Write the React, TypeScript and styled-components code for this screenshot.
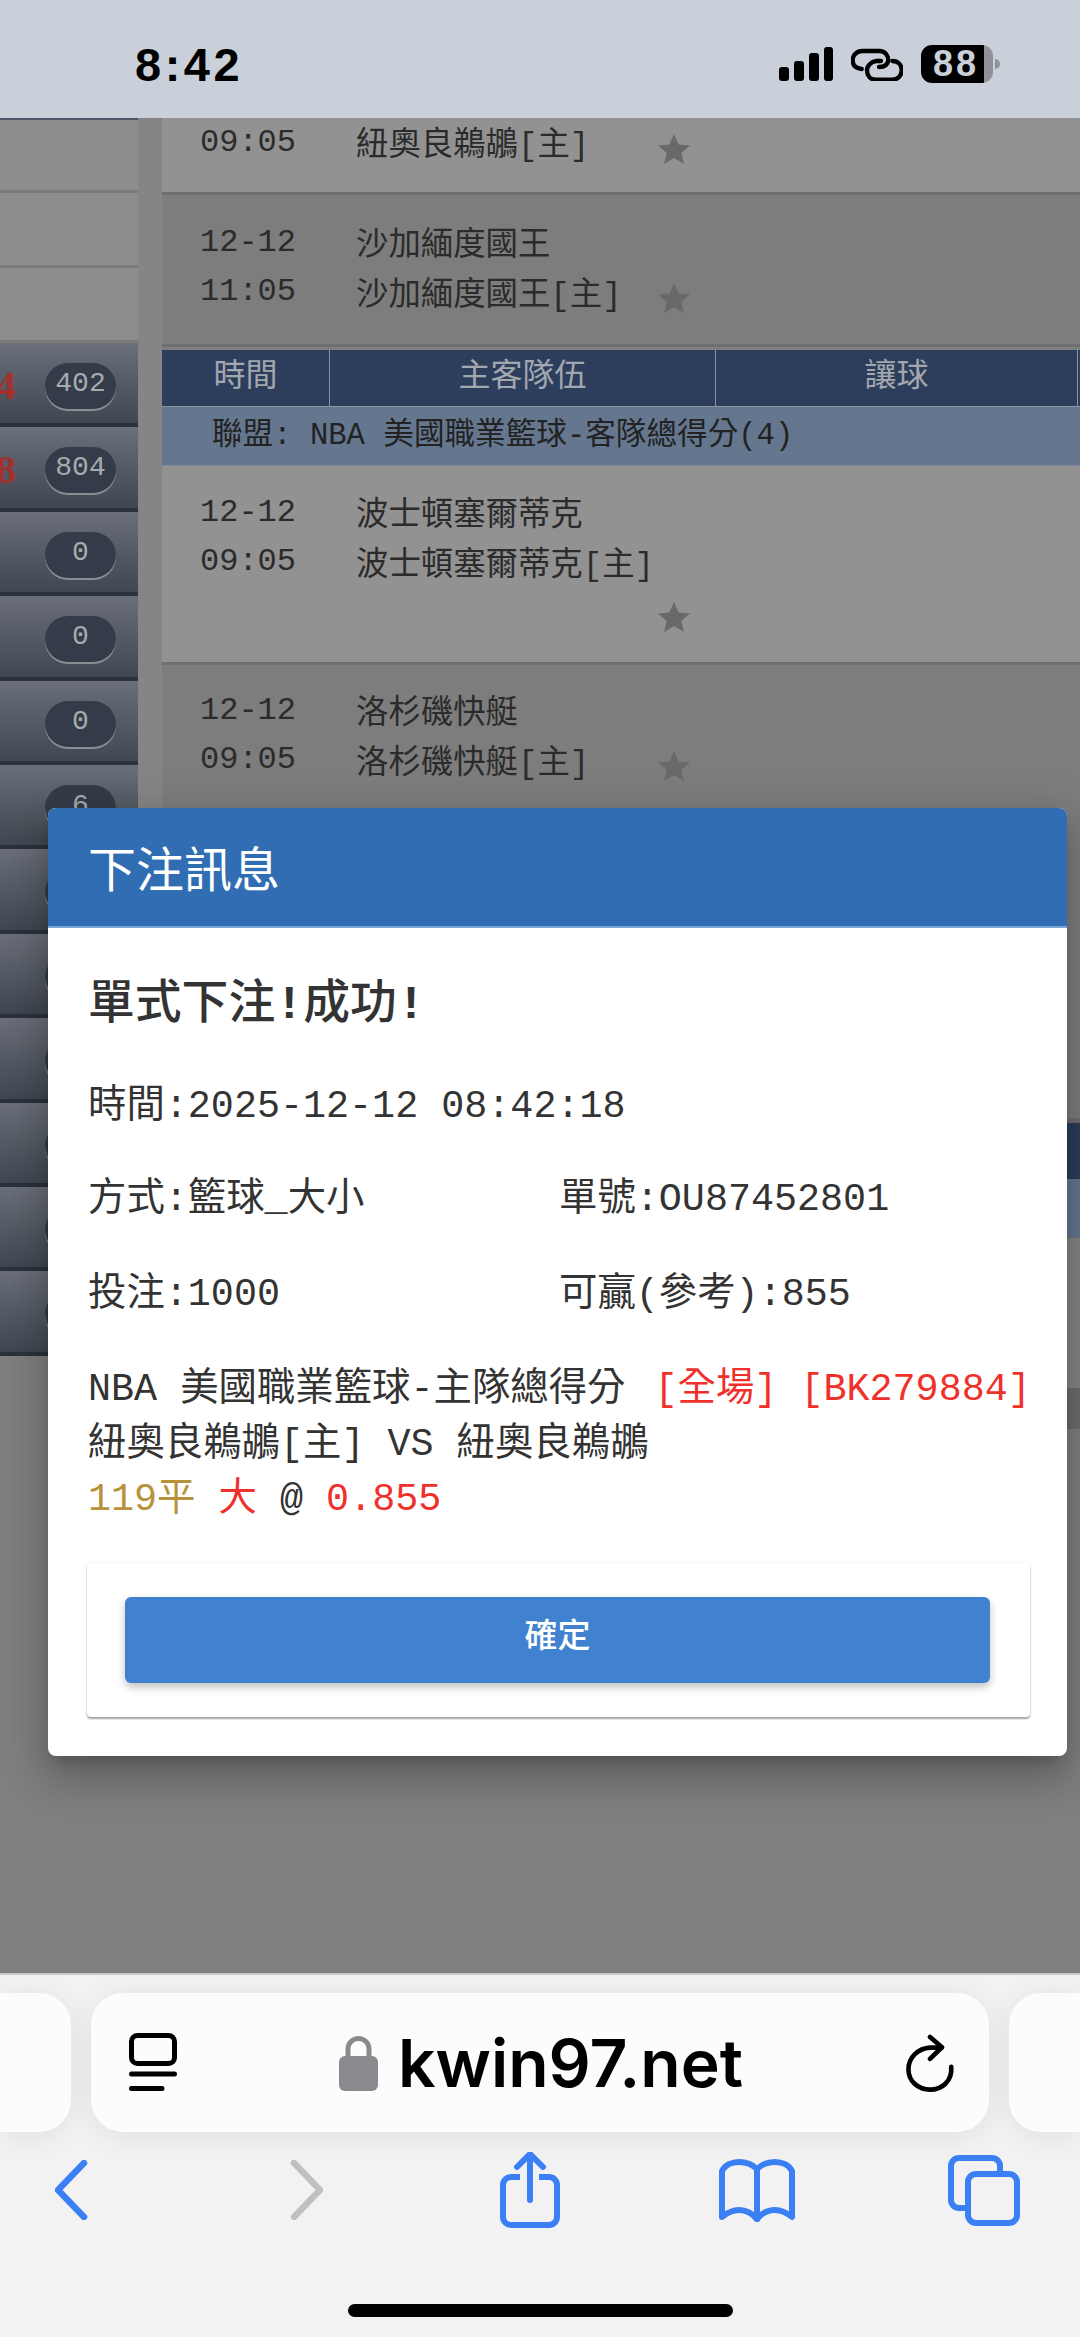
import React, { FC } from "react";
import styled, { createGlobalStyle } from "styled-components";

const MONO = `"Liberation Mono", "Noto Sans CJK TC", monospace`;
const SANS = `"Noto Sans CJK TC", "Liberation Sans", sans-serif`;
const BLUE = "#3b7ff5";

const GlobalStyle = createGlobalStyle`
    html, body {
        margin: 0;
        padding: 0;
        width: 1080px;
        height: 2337px;
        overflow: hidden;
        background: #f2f2f3;
    }
`;

const Phone = styled.div`
    position: relative;
    width: 1080px;
    height: 2337px;
    display: flex;
    flex-direction: column;
    overflow: hidden;
`;

/* status bar */
const StatusBar = styled.div`
    height: 118px;
    flex: none;
    background: #c9d0d9;
    display: flex;
    align-items: flex-start;
    justify-content: space-between;
    box-sizing: border-box;
    padding: 45px 87px 0 135px;
`;

const Clock = styled.div`
    font: 700 47px/40px "Liberation Sans", sans-serif;
    color: #000;
    letter-spacing: 3.5px;
`;

const StatusIcons = styled.div`
    display: flex;
    align-items: center;
    gap: 18px;
    height: 38px;
`;

const Battery = styled.div`
    position: relative;
    width: 72px;
    height: 38px;
    border-radius: 11px;
    background: linear-gradient(90deg, #000 0 88%, #8f9299 88% 100%);
    color: #c9d0d9;
    font: 700 36px/38px "Liberation Sans", sans-serif;
    letter-spacing: 3px;
    padding-left: 12px;
    box-sizing: border-box;

    &::after {
        content: "";
        position: absolute;
        right: -7px;
        top: 14px;
        width: 5px;
        height: 10px;
        border-radius: 0 5px 5px 0;
        background: #8f9299;
    }
`;

/* dimmed page behind the dialog */
const Page = styled.div`
    flex: 1;
    display: flex;
    background: #7f7f7f;
    overflow: hidden;
`;

const Sidebar = styled.div`
    width: 138px;
    flex: none;
    overflow: hidden;
`;

const Gutter = styled.div`
    width: 24px;
    height: 1310px;
    flex: none;
    background: #858585;
`;

const Main = styled.div`
    flex: 1;
    min-width: 0;
`;

const BlankRow = styled.div`
    height: 75px;
    box-sizing: border-box;
    background: #8d8d8d;
    border-bottom: 3px solid #7b7b7b;

    &:first-child {
        border-top: 2px solid #4d5767;
    }
`;

const CountRow = styled.div`
    height: 84.4px;
    box-sizing: border-box;
    display: flex;
    align-items: flex-start;
    justify-content: flex-end;
    padding: 20px 22px 0 0;
    background: linear-gradient(180deg, #6a6f79 0%, #404750 100%);
    border-bottom: 4px solid #2b323c;
`;

const RedCount = styled.span`
    flex: none;
    margin: 1px 29px 0 0;
    font: 700 40px/44px "Liberation Serif", serif;
    color: #a3302c;
`;

const Pill = styled.div`
    flex: none;
    width: 71px;
    height: 46px;
    border-radius: 24px;
    background: #333c48;
    box-shadow: 0 2px 0 #8b8f94;
    color: #a8abae;
    font: 400 28px/42px "Liberation Mono", monospace;
    text-align: center;
`;

const GameRow = styled.div<{ $dark?: boolean; $height: number; $top: number }>`
    height: ${(p) => p.$height}px;
    box-sizing: border-box;
    padding: ${(p) => p.$top}px 0 0 38px;
    background: ${(p) => (p.$dark ? "#7d7d7d" : "#929292")};
    border-bottom: 3px solid #6f6f6f;
    color: #2b2b2b;
`;

const TeamName = styled.span`
    width: 302px;
    flex: none;
    position: relative;
    top: 4px;
    font-size: 32.4px;
`;

const GameLine = styled.div`
    display: flex;
    height: 49px;
    align-items: center;
    font: 400 32px/48px ${MONO};
    white-space: nowrap;

    & > svg {
        margin-top: 12px;
    }

    & + & ${TeamName} {
        top: 5px;
    }
`;

const GameTime = styled.span`
    width: 156px;
    flex: none;
`;

const WrappedStar = styled.div`
    padding: 16px 0 0 458px;
`;

const Star = styled.svg`
    width: 32px;
    height: 30px;
    flex: none;
    display: block;
    fill: #696969;
`;

const TableHead = styled.div`
    margin-top: 3px;
    display: grid;
    grid-template-columns: 168px 386px 362px;
    height: 56px;
    background: #2c3e5c;
    border-bottom: 1px solid #8a93a3;
`;

const HeadCell = styled.div`
    border-right: 1px solid #8a93a3;
    color: #a2a7b0;
    font: 400 32px/44px ${SANS};
    text-align: center;
`;

const LeagueRow = styled.div`
    height: 59px;
    box-sizing: border-box;
    padding-left: 50px;
    background: #65778f;
    color: #222;
    font: 400 30.6px/58px ${MONO};
    white-space: nowrap;
    border-bottom: 1px solid #7d8797;
`;

const Filler = styled.div<{ $height: number; $color: string }>`
    height: ${(p) => p.$height}px;
    background: ${(p) => p.$color};
`;

/* dialog */
const Dialog = styled.div`
    position: absolute;
    left: 48px;
    top: 808px;
    width: 1019px;
    height: 948px;
    border-radius: 8px;
    background: #fff;
    overflow: hidden;
    box-shadow: 0 11px 15px -7px rgba(0, 0, 0, 0.2), 0 24px 38px 3px rgba(0, 0, 0, 0.14), 0 9px 46px 8px rgba(0, 0, 0, 0.12);
`;

const DialogHeader = styled.div`
    height: 120px;
    box-sizing: border-box;
    padding-left: 40px;
    background: #316db2;
    border-bottom: 2px solid #7ba5d6;
    color: #fff;
    font: 400 48px/116px ${SANS};
`;

const DialogBody = styled.div`
    padding: 53px 37px 0 39px;
    color: #333;
`;

const Heading = styled.div`
    padding-left: 1px;
    font: 500 46.800px/50px ${MONO};
    white-space: nowrap;
`;

const Bang = styled.span`
    font-weight: 700;
`;

const InfoRow = styled.div<{ $gap: number }>`
    margin-top: ${(p) => p.$gap}px;
    padding-left: 1px;
    display: flex;
    font: 400 38.400px/55px ${MONO};
    white-space: nowrap;
`;

const InfoCell = styled.div`
    width: 471px;
    flex: none;
`;

const BetText = styled.div`
    margin-top: 40px;
    padding-left: 1px;
    font: 400 38.400px/55px ${MONO};
    white-space: nowrap;
`;

const Red = styled.span`
    color: #f0302a;
`;

const RedTag = styled(Red)`
    margin-left: 6px;
`;

const Gold = styled.span`
    color: #b8923a;
`;

const ActionCard = styled.div`
    margin-top: 35px;
    padding: 34px 40px 34px 38px;
    border-radius: 4px;
    background: #fff;
    box-shadow: 0 2px 2px rgba(0, 0, 0, 0.35), 0 0 4px rgba(0, 0, 0, 0.06);
`;

const ConfirmButton = styled.button`
    display: block;
    width: 100%;
    height: 86px;
    padding: 0 0 14px;
    border: 0;
    border-radius: 6px;
    background: #4081d0;
    color: #fff;
    font: 500 33px/72px ${SANS};
    box-shadow: 0 4px 8px rgba(0, 0, 0, 0.25);
`;

/* safari toolbar */
const Toolbar = styled.div`
    height: 364px;
    flex: none;
    box-sizing: border-box;
    background: #f2f2f3;
    border-top: 2px solid #c9c9c9;
    padding-top: 18px;
`;

const TabStrip = styled.div`
    display: flex;
    gap: 20px;
    height: 139px;
`;

const SideTab = styled.div<{ $side: "left" | "right" }>`
    width: 71px;
    flex: none;
    background: #fcfcfc;
    border-radius: ${(p) => (p.$side === "left" ? "0 32px 32px 0" : "32px 0 0 32px")};
    box-shadow: 0 4px 30px rgba(0, 0, 0, 0.08);
`;

const UrlBar = styled.div`
    flex: 1;
    display: flex;
    align-items: center;
    justify-content: space-between;
    box-sizing: border-box;
    padding: 0 34px 0 38px;
    background: #fcfcfc;
    border-radius: 32px;
    box-shadow: 0 4px 30px rgba(0, 0, 0, 0.08);
`;

const UrlGroup = styled.div`
    display: flex;
    align-items: center;
    gap: 20px;
`;

const UrlText = styled.span`
    font: 600 66px/80px Inter, "Liberation Sans", sans-serif;
    color: #000;
    letter-spacing: 0;
`;

const NavRow = styled.div`
    margin-top: 20px;
    height: 76px;
    display: grid;
    grid-template-columns: 142px 328px 120px 334px 120px;
    justify-items: center;
    align-items: center;
`;

const HomeBar = styled.div`
    margin: 76px auto 0;
    width: 385px;
    height: 13px;
    border-radius: 7px;
    background: #000;
`;

const GameStar: FC = () => (
    <Star viewBox="0 0 32 30">
        <path d="M16 0l4.6 10.6 11.4.9-8.7 7.4 2.700 11.100-10-6-10 6 2.700-11.100L0 11.500l11.400-.9z" />
    </Star>
);

const SignalIcon: FC = () => (
    <svg width="54" height="34" viewBox="0 0 54 34" fill="#000">
        <rect x="0" y="20" width="10" height="14" rx="3" />
        <rect x="15" y="14" width="10" height="20" rx="3" />
        <rect x="30" y="6" width="10" height="28" rx="3" />
        <rect x="45" y="0" width="9" height="34" rx="3" />
    </svg>
);

const LinkIcon: FC = () => (
    <svg width="52" height="34" viewBox="12 24 156 102" fill="none" stroke="#000" strokeWidth="13" strokeLinecap="round">
        <path d="M44 90C26 88 17 78 17 64 17 48 30 36 46 36H98C114 36 124 50 124 64 122 78 112 84 96 84" />
        <path d="M136 66C154 66 164 78 164 94 164 110 152 122 136 122H86C70 122 60 110 60 94 60 80 72 68 88 66H102" />
    </svg>
);

const TabsGlyph: FC = () => (
    <svg width="48" height="60" viewBox="0 0 48 60" fill="none" stroke="#000" strokeWidth="5" strokeLinecap="round">
        <rect x="2.500" y="2.500" width="43" height="28" rx="6" />
        <path d="M2.500 41H45.500M2.500 55.500H33" />
    </svg>
);

const LockIcon: FC = () => (
    <svg width="39" height="56" viewBox="0 0 39 56">
        <path d="M9 24V14a10.500 10.500 0 0 1 21 0v10" fill="none" stroke="#8a8a8e" strokeWidth="5" />
        <rect x="0" y="21" width="39" height="35" rx="6" fill="#8a8a8e" />
    </svg>
);

const ReloadIcon: FC = () => (
    <svg width="50" height="58" viewBox="45 35 150 175" fill="none" stroke="#000" strokeWidth="14" strokeLinecap="round" strokeLinejoin="round">
        <path d="M184 134C188 178 155 203 120 203 85 203 55 178 55 142 55 105 85 78 120 76H155" />
        <path d="M120 44L156 75 120 110" />
    </svg>
);

const Chevron: FC<{ color: string; flip?: boolean }> = ({ color, flip }) => (
    <svg width="33" height="60" viewBox="0 0 33 60" fill="none" stroke={color} strokeWidth="6.500" strokeLinecap="round" strokeLinejoin="round">
        <path d={flip ? "M4 3l26 27-26 27" : "M29 3L3 30l26 27"} />
    </svg>
);

const ShareIcon: FC = () => (
    <svg width="60" height="76" viewBox="0 0 60 76" fill="none" stroke={BLUE} strokeWidth="6" strokeLinejoin="round">
        <path d="M20 25H11a8 8 0 0 0-8 8V65a8 8 0 0 0 8 8H49a8 8 0 0 0 8-8V33a8 8 0 0 0-8-8H39" />
        <path d="M30 48V3M17 15L30 2 43 15" strokeLinecap="round" />
    </svg>
);

const BookIcon: FC = () => (
    <svg width="76" height="63" viewBox="0 0 76 63" fill="none" stroke={BLUE} strokeWidth="6" strokeLinecap="round" strokeLinejoin="round">
        <path d="M38 10C33 5 26 3 20 3 13 3 6 6 3 12V58C8 54 14 51 20 51 27 51 33 54 38 60 43 54 49 51 56 51 62 51 68 54 73 58V12C70 6 63 3 56 3 50 3 43 5 38 10Z" />
        <path d="M38 10V60" />
    </svg>
);

const TabsIcon: FC = () => (
    <svg width="72" height="71" viewBox="0 0 72 71" fill="none" stroke={BLUE} strokeWidth="6" strokeLinejoin="round">
        <path d="M52 16V11a8 8 0 0 0-8-8H11a8 8 0 0 0-8 8V45a8 8 0 0 0 8 8H20" />
        <rect x="20" y="19" width="49" height="49" rx="8" />
    </svg>
);

const counts: { pill: string; red?: string }[] = [
    { pill: "402", red: "4" },
    { pill: "804", red: "8" },
    { pill: "0" },
    { pill: "0" },
    { pill: "0" },
    { pill: "6" },
    { pill: "" },
    { pill: "" },
    { pill: "" },
    { pill: "" },
    { pill: "" },
    { pill: "" },
];

export default function App() {
    return (
        <Phone>
            <GlobalStyle />
            <StatusBar>
                <Clock>8:42</Clock>
                <StatusIcons>
                    <SignalIcon />
                    <LinkIcon />
                    <Battery>88</Battery>
                </StatusIcons>
            </StatusBar>

            <Page>
                <Sidebar>
                    <BlankRow />
                    <BlankRow />
                    <BlankRow />
                    {counts.map((c, i) => (
                        <CountRow key={i}>
                            {c.red && <RedCount>{c.red}</RedCount>}
                            <Pill>{c.pill}</Pill>
                        </CountRow>
                    ))}
                </Sidebar>
                <Gutter />
                <Main>
                    <GameRow $height={77} $top={0}>
                        <GameLine>
                            <GameTime>09:05</GameTime>
                            <TeamName>紐奧良鵜鶘[主]</TeamName>
                            <GameStar />
                        </GameLine>
                    </GameRow>
                    <GameRow $dark $height={152} $top={23}>
                        <GameLine>
                            <GameTime>12-12</GameTime>
                            <TeamName>沙加緬度國王</TeamName>
                        </GameLine>
                        <GameLine>
                            <GameTime>11:05</GameTime>
                            <TeamName>沙加緬度國王[主]</TeamName>
                            <GameStar />
                        </GameLine>
                    </GameRow>
                    <TableHead>
                        <HeadCell>時間</HeadCell>
                        <HeadCell>主客隊伍</HeadCell>
                        <HeadCell>讓球</HeadCell>
                    </TableHead>
                    <LeagueRow>聯盟: NBA 美國職業籃球-客隊總得分(4)</LeagueRow>
                    <GameRow $height={199} $top={22}>
                        <GameLine>
                            <GameTime>12-12</GameTime>
                            <TeamName>波士頓塞爾蒂克</TeamName>
                        </GameLine>
                        <GameLine>
                            <GameTime>09:05</GameTime>
                            <TeamName>波士頓塞爾蒂克[主]</TeamName>
                        </GameLine>
                        <WrappedStar>
                            <GameStar />
                        </WrappedStar>
                    </GameRow>
                    <GameRow $dark $height={456} $top={21}>
                        <GameLine>
                            <GameTime>12-12</GameTime>
                            <TeamName>洛杉磯快艇</TeamName>
                        </GameLine>
                        <GameLine>
                            <GameTime>09:05</GameTime>
                            <TeamName>洛杉磯快艇[主]</TeamName>
                            <GameStar />
                        </GameLine>
                    </GameRow>
                    <Filler $height={2} $color="#6f6f6f" />
                    <Filler $height={56} $color="#2c3e5c" />
                    <Filler $height={59} $color="#65778f" />
                    <Filler $height={150} $color="#858585" />
                    <Filler $height={41} $color="#6d6d6d" />
                </Main>
            </Page>

            <Toolbar>
                <TabStrip>
                    <SideTab $side="left" />
                    <UrlBar>
                        <TabsGlyph />
                        <UrlGroup>
                            <LockIcon />
                            <UrlText>kwin97.net</UrlText>
                        </UrlGroup>
                        <ReloadIcon />
                    </UrlBar>
                    <SideTab $side="right" />
                </TabStrip>
                <NavRow>
                    <Chevron color={BLUE} />
                    <Chevron color="#c0c0c0" flip />
                    <ShareIcon />
                    <BookIcon />
                    <TabsIcon />
                </NavRow>
                <HomeBar />
            </Toolbar>

            <Dialog>
                <DialogHeader>下注訊息</DialogHeader>
                <DialogBody>
                    <Heading>單式下注<Bang>!</Bang>成功<Bang>!</Bang></Heading>
                    <InfoRow $gap={49}>時間:2025-12-12 08:42:18</InfoRow>
                    <InfoRow $gap={38}>
                        <InfoCell>方式:籃球_大小</InfoCell>
                        <InfoCell>單號:OU87452801</InfoCell>
                    </InfoRow>
                    <InfoRow $gap={40}>
                        <InfoCell>投注:1000</InfoCell>
                        <InfoCell>可贏(參考):855</InfoCell>
                    </InfoRow>
                    <BetText>
                        NBA 美國職業籃球-主隊總得分 <RedTag>[全場] [BK279884]</RedTag>
                        <br />
                        紐奧良鵜鶘[主] VS 紐奧良鵜鶘
                        <br />
                        <Gold>119平</Gold> <Red>大</Red> @ <Red>0.855</Red>
                    </BetText>
                    <ActionCard>
                        <ConfirmButton>確定</ConfirmButton>
                    </ActionCard>
                </DialogBody>
            </Dialog>
        </Phone>
    );
}
